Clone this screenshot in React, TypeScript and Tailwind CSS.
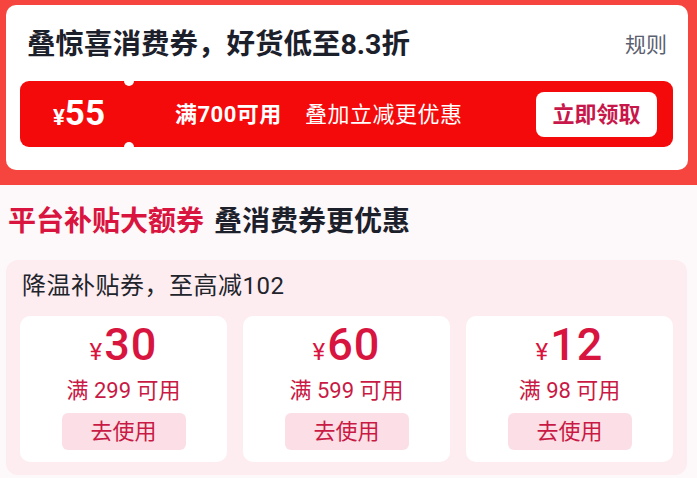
import React from "react";

const FONT = "font-['Roboto','Noto_Sans_CJK_SC',sans-serif]";

function SmallCoupon({ amount, min }: { amount: string; min: string }) {
  return (
    <div className="flex h-[146px] flex-col items-center rounded-[10px] bg-white pt-[7px] pb-[12px]">
      <div className="flex h-[44px] items-baseline leading-[44px] text-[#d7153f]">
        <span className="mr-[2px] text-[24px]">¥</span>
        <span className="text-[45px] font-medium tracking-[1px]">{amount}</span>
      </div>
      <div className="mt-[10px] h-[28px] text-[22px] leading-[28px] text-[#c81a45]">
        满 {min} 可用
      </div>
      <button className="mt-[8px] flex h-[37px] w-[124px] items-center justify-center rounded-[6px] bg-[#fcdfe6] text-[22px] leading-[37px] text-[#c81a45]">
        去使用
      </button>
    </div>
  );
}

export default function App() {
  return (
    <div className={`${FONT} h-[478px] w-[697px] overflow-hidden bg-[#fdf9fa]`}>
      {/* Top red section */}
      <div className="bg-[#f5453e] pt-[5px] pr-[9px] pb-[15px] pl-[6px]">
        <div className="rounded-[10px] bg-white pt-[26px] pr-[15px] pb-[23px] pl-[14px]">
          <div className="flex h-[28px] items-center justify-between pl-[7px] pr-[6px]">
            <span className="text-[28.5px] font-bold leading-[28px] text-[#1c202b]">
              叠惊喜消费券，好货低至8.3折
            </span>
            <span className="text-[21px] leading-[28px] text-[#5b6070]">规则</span>
          </div>
          <div className="relative mt-[22px] flex h-[66px] items-center rounded-[9px] bg-[#f50a0b]">
            <span className="absolute left-[104px] top-[-5px] h-[10px] w-[10px] rounded-full bg-white" />
            <span className="absolute left-[104px] bottom-[-5px] h-[10px] w-[10px] rounded-full bg-white" />
            <div className="flex w-[109px] items-baseline pl-[33px] text-white">
              <span className="text-[22px] font-bold">¥</span>
              <span className="text-[35px] font-bold leading-[40px]">55</span>
            </div>
            <span className="ml-[46px] text-[22px] font-bold tracking-[0.5px] text-white">满700可用</span>
            <span className="ml-[23px] text-[22px] tracking-[0.5px] text-white">叠加立减更优惠</span>
            <button className="ml-auto mr-[16px] flex h-[45px] w-[121px] items-center justify-center rounded-[8px] bg-white text-[22px] font-bold text-[#c8174a]">
              立即领取
            </button>
          </div>
        </div>
      </div>

      {/* Lower section */}
      <div className="pt-[21px]">
        <div className="flex h-[32px] items-center gap-[10px] pl-[8px] text-[28px] font-bold leading-[32px]">
          <span className="text-[#d9143f]">平台补贴大额券</span>
          <span className="text-[#1c202b]">叠消费券更优惠</span>
        </div>
        <div className="ml-[6px] mt-[22px] w-[681px] rounded-[12px] bg-[#fdedf0] px-[14px] pt-[12px] pb-[13px]">
          <div className="h-[28px] pl-[2px] text-[24px] leading-[28px] tracking-[0.5px] text-[#22242c]">
            降温补贴券，至高减102
          </div>
          <div className="mt-[16px] grid grid-cols-3 gap-[16px]">
            <SmallCoupon amount="30" min="299" />
            <SmallCoupon amount="60" min="599" />
            <SmallCoupon amount="12" min="98" />
          </div>
        </div>
      </div>
    </div>
  );
}
